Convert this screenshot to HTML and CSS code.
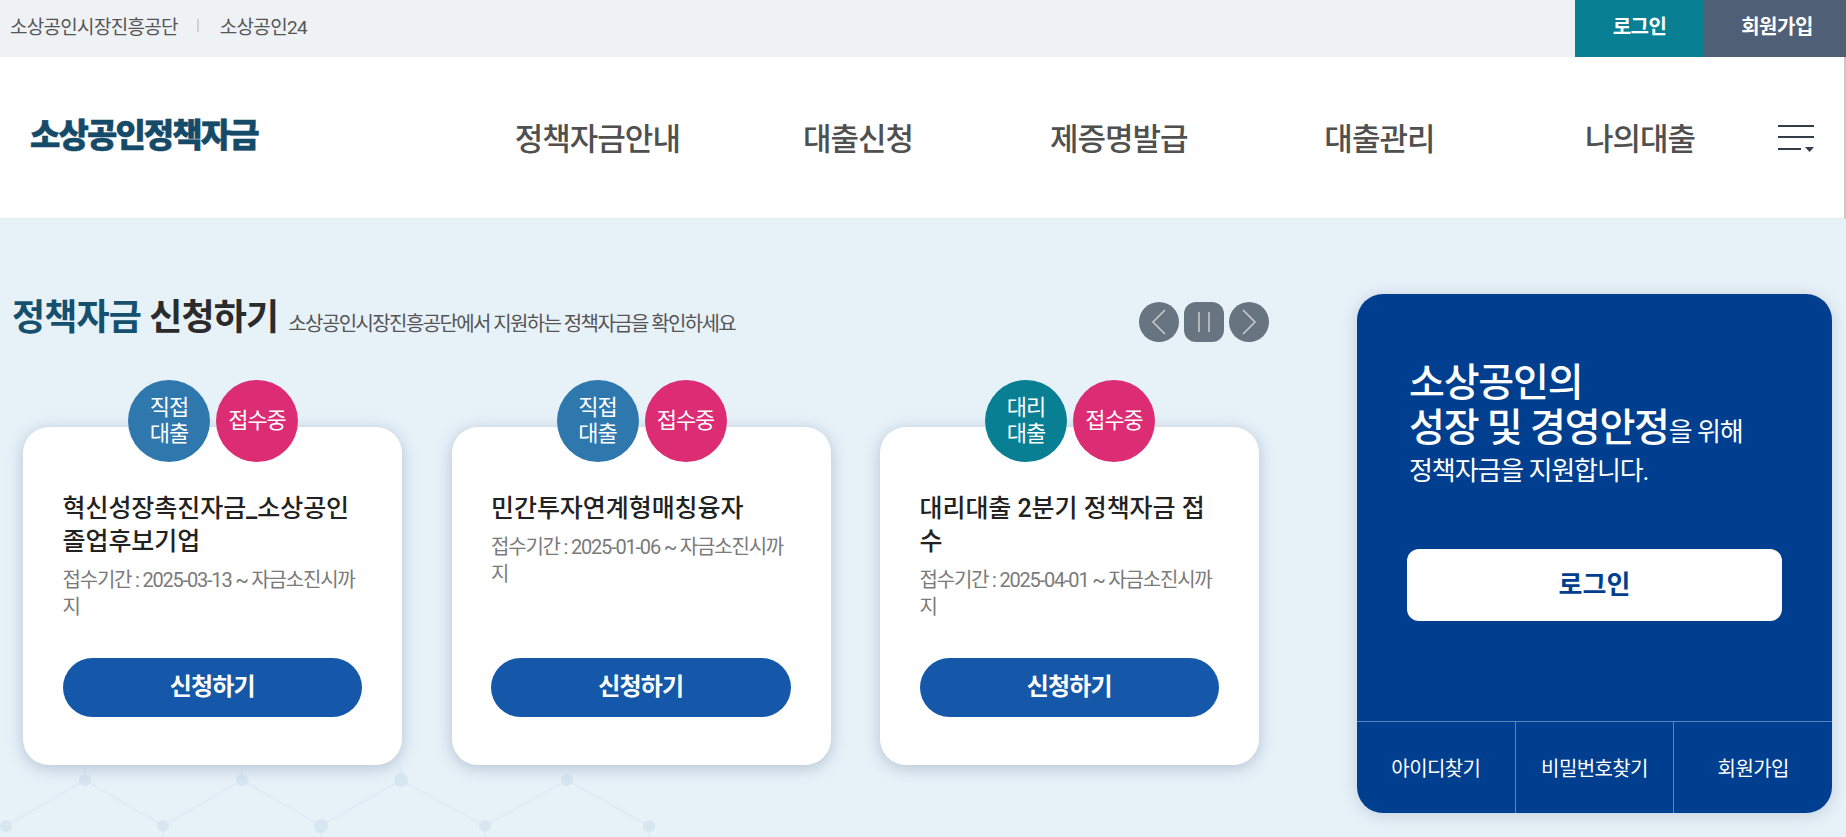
FILE: index.html
```html
<!DOCTYPE html>
<html lang="ko">
<head>
  <meta charset="UTF-8" />
  <title>소상공인정책자금</title>
  <link rel="stylesheet" href="styles.css">
</head>
<body>
  <div class="topbar">
    <div class="toplinks">
      <a href="#">소상공인시장진흥공단</a>
      <span class="sep"></span>
      <a href="#">소상공인24</a>
    </div>
    <div class="topbtns">
      <a href="#" class="btn-login">로그인</a>
      <a href="#" class="btn-join">회원가입</a>
    </div>
  </div>

  <header class="header">
    <a href="#" class="logo">소상공인정책자금</a>
    <nav class="gnb">
      <a href="#">정책자금안내</a>
      <a href="#">대출신청</a>
      <a href="#">제증명발급</a>
      <a href="#">대출관리</a>
      <a href="#">나의대출</a>
    </nav>
    <a href="#" class="allmenu" aria-label="전체메뉴">
      <svg width="36" height="28" viewBox="0 0 36 28">
        <path d="M0 2h36M0 13h36M0 25h23" stroke="#333d47" stroke-width="2" fill="none"/>
        <path d="M27 23h9l-4.500 5z" fill="#333d47"/>
      </svg>
    </a>
  </header>

  <main class="main">
    <svg class="net" width="680" height="70" viewBox="0 0 680 70">
      <g fill="none" stroke="#deeaf3" stroke-width="1.500">
        <path d="M6 59L85 13L163 59L242 13L321 59L401 13L485 59L567 13L649 59"/>
        <path d="M85 0V13M242 0V13M401 0V13M163 59V70M321 59V70M485 59V70M649 59V70"/>
      </g>
      <g fill="#d8e6f0">
        <circle cx="85" cy="13" r="6"/><circle cx="242" cy="13" r="6"/>
        <circle cx="401" cy="13" r="7"/><circle cx="567" cy="13" r="6"/>
        <circle cx="6" cy="59" r="6"/><circle cx="163" cy="59" r="6"/>
        <circle cx="321" cy="59" r="7"/><circle cx="485" cy="59" r="6"/>
        <circle cx="649" cy="59" r="6"/>
      </g>
    </svg>

    <section class="apply">
      <div class="apply-head">
        <h2><em>정책자금</em> 신청하기</h2>
        <p>소상공인시장진흥공단에서 지원하는 정책자금을 확인하세요</p>
        <div class="ctrl">
          <button type="button" class="round" aria-label="이전">
            <svg width="16" height="28" viewBox="0 0 16 28"><path d="M14 2L2 14l12 12" stroke="#c9ced3" stroke-width="1.500" fill="none"/></svg>
          </button>
          <button type="button" class="square" aria-label="정지">
            <svg width="14" height="20" viewBox="0 0 14 20"><path d="M2 0v20M12 0v20" stroke="#c9ced3" stroke-width="1.500" fill="none"/></svg>
          </button>
          <button type="button" class="round" aria-label="다음">
            <svg width="16" height="28" viewBox="0 0 16 28"><path d="M2 2l12 12L2 26" stroke="#c9ced3" stroke-width="1.500" fill="none"/></svg>
          </button>
        </div>
      </div>

      <div class="cards">
        <article class="card">
          <div class="badges"><span class="b-direct">직접<br>대출</span><span class="b-open">접수중</span></div>
          <h3>혁신성장촉진자금_소상공인 졸업후보기업</h3>
          <p>접수기간 : 2025-03-13 ~ 자금소진시까지</p>
          <a href="#" class="apply-btn">신청하기</a>
        </article>
        <article class="card">
          <div class="badges"><span class="b-direct">직접<br>대출</span><span class="b-open">접수중</span></div>
          <h3>민간투자연계형매칭융자</h3>
          <p>접수기간 : 2025-01-06 ~ 자금소진시까지</p>
          <a href="#" class="apply-btn">신청하기</a>
        </article>
        <article class="card">
          <div class="badges"><span class="b-agent">대리<br>대출</span><span class="b-open">접수중</span></div>
          <h3>대리대출 2분기 정책자금 접수</h3>
          <p>접수기간 : 2025-04-01 ~ 자금소진시까지</p>
          <a href="#" class="apply-btn">신청하기</a>
        </article>
      </div>
    </section>

    <aside class="panel">
      <div class="panel-body">
        <p class="panel-txt"><strong>소상공인의<br>성장 및 경영안정</strong>을 위해<br>정책자금을 지원합니다.</p>
        <a href="#" class="panel-login">로그인</a>
      </div>
      <div class="panel-links">
        <a href="#">아이디찾기</a>
        <a href="#">비밀번호찾기</a>
        <a href="#">회원가입</a>
      </div>
    </aside>
  </main>
</body>
</html>
```

FILE: styles.css
```css
* {
  box-sizing: border-box;
}
html, body {
  margin: 0;
  padding: 0;
  height: 837px;
  overflow: hidden;
}
body {
  font-family: Roboto, "Noto Sans CJK KR", sans-serif;
  background: #e7f1f8;
  color: #222;
}
a {
  color: inherit;
  text-decoration: none;
}
h2, h3, p {
  margin: 0;
}

/* top bar */
.topbar {
  display: flex;
  justify-content: space-between;
  height: 57px;
  background: #eef2f5;
}
.toplinks {
  display: flex;
  align-items: center;
  padding: 0 0 6px 10px;
  font-size: 19px;
  letter-spacing: -0.700px;
  color: #555;
}
.sep {
  width: 2px;
  height: 13px;
  margin: 0 21px 0 19px;
  background: #ccd1d6;
}
.topbtns {
  display: flex;
}
.topbtns a {
  display: flex;
  align-items: center;
  justify-content: center;
  padding-bottom: 7px;
  font-size: 20px;
  font-weight: 700;
  letter-spacing: -0.500px;
  color: #fff;
}
.btn-login {
  width: 129px;
  background: #087f93;
}
.btn-join {
  width: 142px;
  padding-left: 4px;
  background: #4f5f76;
}

/* header */
.header {
  display: flex;
  align-items: center;
  height: 162px;
  padding-left: 30px;
  background: #fff;
  border-bottom: 1px solid #e2e8ef;
  border-right: 2px solid #c8c8c8;
}
.logo {
  width: 437px;
  padding-bottom: 10px;
  font-size: 33px;
  font-weight: 900;
  letter-spacing: -1.900px;
  -webkit-text-stroke: 0.500px #154a68;
  color: #154a68;
}
.gnb {
  display: grid;
  grid-template-columns: repeat(5, 260.700px);
  padding-bottom: 2px;
  text-align: center;
  font-size: 31px;
  font-weight: 500;
  letter-spacing: -1px;
  color: #50504f;
}
.allmenu {
  display: flex;
  margin-left: 8px;
}

/* main */
.main {
  position: relative;
  display: flex;
  align-items: flex-start;
  justify-content: space-between;
  height: 618px;
  padding: 75px 14px 0 12px;
}
.net {
  position: absolute;
  left: 0;
  bottom: 0;
}
.apply {
  position: relative;
  width: 1257px;
  padding-top: 8px;
}
.apply-head {
  display: flex;
  align-items: center;
  height: 40px;
}
.apply-head h2 {
  margin-bottom: 16px;
  font-size: 36px;
  font-weight: 700;
  letter-spacing: -0.850px;
  color: #2b2b2b;
}
.apply-head h2 em {
  font-style: normal;
  color: #15506f;
}
.apply-head p {
  flex: 1;
  margin-left: 10px;
  font-size: 20px;
  letter-spacing: -1.600px;
  color: #555;
}
.ctrl {
  display: flex;
  gap: 5px;
}
.ctrl button {
  display: flex;
  align-items: center;
  justify-content: center;
  width: 40px;
  height: 40px;
  padding: 0;
  border: none;
  background: #687480;
}
.round {
  border-radius: 50%;
}
.square {
  border-radius: 12px;
}

/* cards */
.cards {
  display: flex;
  gap: 49.500px;
  margin: 85px 0 0 11px;
}
.card {
  position: relative;
  display: flex;
  flex-direction: column;
  width: 379px;
  height: 338px;
  padding: 65px 40px 48px 39.500px;
  background: #fff;
  border-radius: 26px;
  box-shadow: 0 3px 16px rgba(50, 75, 110, 0.28);
}
.badges {
  position: absolute;
  top: -47px;
  left: 105px;
  display: flex;
  gap: 6px;
}
.badges span {
  display: flex;
  align-items: center;
  justify-content: center;
  width: 82px;
  height: 82px;
  border-radius: 50%;
  text-align: center;
  font-size: 22px;
  line-height: 26px;
  letter-spacing: -1.100px;
  color: #fff;
}
.b-direct {
  background: #2f78ae;
}
.b-agent {
  background: #087f93;
}
.b-open {
  background: #db2c74;
}
.card h3 {
  font-size: 25px;
  font-weight: 500;
  line-height: 33px;
  letter-spacing: -0.050px;
  word-break: break-all;
  color: #222;
}
.card p {
  margin-top: 9px;
  font-size: 20px;
  line-height: 27px;
  letter-spacing: -1.200px;
  word-break: break-all;
  color: #7a7a7a;
}
.apply-btn {
  display: block;
  margin-top: auto;
  height: 59px;
  border-radius: 30px;
  background: #1558a9;
  text-align: center;
  font-size: 24px;
  font-weight: 700;
  line-height: 58px;
  letter-spacing: -0.800px;
  color: #fff;
}

/* login panel */
.panel {
  position: relative;
  display: flex;
  flex-direction: column;
  width: 475px;
  height: 519px;
  background: #003f8f;
  border-radius: 26px;
  box-shadow: 0 2px 16px rgba(50, 75, 110, 0.2);
  overflow: hidden;
  color: #fff;
}
.panel-body {
  flex: 1;
  padding: 68px 50px 0;
}
.panel-txt {
  padding-left: 2px;
  font-size: 26px;
  line-height: 39px;
  letter-spacing: -1.100px;
}
.panel-txt strong {
  font-size: 39px;
  font-weight: 500;
  line-height: 43px;
  letter-spacing: -1.200px;
}
.panel-login {
  display: block;
  height: 72px;
  margin-top: 58px;
  background: #fff;
  border-radius: 12px;
  text-align: center;
  font-size: 26px;
  font-weight: 700;
  line-height: 72px;
  color: #003f8f;
}
.panel-links {
  display: flex;
  height: 92px;
  border-top: 1px solid #5a84bd;
}
.panel-links a {
  flex: 1;
  display: flex;
  align-items: center;
  justify-content: center;
  font-size: 20px;
  letter-spacing: -0.600px;
  border-left: 1px solid #5a84bd;
}
.panel-links a:first-child {
  border-left: none;
}
```
